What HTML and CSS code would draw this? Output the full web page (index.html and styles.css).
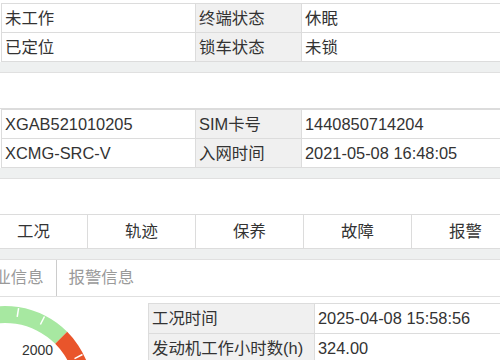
FILE: index.html
```html
<!DOCTYPE html>
<html lang="zh-CN">
<head>
<meta charset="utf-8">
<link rel="stylesheet" href="styles.css">
</head>
<body>
<div class="page">
  <div class="info">
    <div class="row">
      <div class="cell val first">未工作</div>
      <div class="cell lab">终端状态</div>
      <div class="cell val last">休眠</div>
    </div>
    <div class="row">
      <div class="cell val first">已定位</div>
      <div class="cell lab">锁车状态</div>
      <div class="cell val last">未锁</div>
    </div>
  </div>
  <div class="sep"></div>
  <div class="blank"></div>
  <div class="info">
    <div class="row">
      <div class="cell val first">XGAB521010205</div>
      <div class="cell lab">SIM卡号</div>
      <div class="cell val last">1440850714204</div>
    </div>
    <div class="row">
      <div class="cell val first">XCMG-SRC-V</div>
      <div class="cell lab">入网时间</div>
      <div class="cell val last">2021-05-08 16:48:05</div>
    </div>
  </div>
  <div class="sep"></div>
  <div class="blank"></div>
  <div class="tabs">
    <div class="tab">工况</div>
    <div class="tab">轨迹</div>
    <div class="tab">保养</div>
    <div class="tab">故障</div>
    <div class="tab">报警</div>
  </div>
  <div class="sep"></div>
  <div class="subtabs">
    <div class="subtab shifted">作业信息</div>
    <div class="subtab">报警信息</div>
  </div>
  <div class="content">
    <svg class="gauge" width="148" height="63" viewBox="0 0 148 63">
      <path d="M -81.7 112.3 A 88 88 0 0 1 67.2 34.8 L 55.2 46.8 A 71 71 0 0 0 -64.9 109.3 Z" fill="#a7e8a1"/>
      <path d="M 67.2 34.8 A 88 88 0 0 1 67.2 159.2 L 55.2 147.2 A 71 71 0 0 0 55.2 46.8 Z" fill="#e9552b"/>
      <g stroke="#ffffff" stroke-width="1.5">
        <line x1="17.2" y1="19.9" x2="18.6" y2="11.1"/>
        <line x1="40.4" y1="27.5" x2="44.5" y2="19.5"/>
        <line x1="74.5" y1="61.6" x2="82.5" y2="57.5"/>
      </g>
      <text x="22" y="58" class="glabel">2000</text>
    </svg>
    <div class="work">
      <div class="row">
        <div class="cell wlab">工况时间</div>
        <div class="cell wval">2025-04-08 15:58:56</div>
      </div>
      <div class="row">
        <div class="cell wlab">发动机工作小时数(h)</div>
        <div class="cell wval">324.00</div>
      </div>
    </div>
  </div>
</div>
</body>
</html>
```
FILE: styles.css
```css
html, body {
  margin: 0;
  padding: 0;
  background: #ffffff;
  overflow: hidden;
}
body {
  width: 500px;
  height: 360px;
  font-family: "Liberation Sans", "Noto Sans CJK SC", sans-serif;
  font-size: 16.4px;
  color: #333333;
}
.page {
  padding-top: 3px;
  width: 500px;
}
.info {
  margin-left: 1px;
  border: 1px solid #dcdcdc;
  border-right: none;
  width: 540px;
}
.row {
  display: flex;
}
.row + .row {
  border-top: 1px solid #dcdcdc;
}
.cell {
  height: 29px;
  line-height: 29px;
  padding: 0 3px;
  box-sizing: border-box;
  white-space: nowrap;
  overflow: hidden;
}
.info .first {
  width: 194px;
  border-right: 1px solid #dcdcdc;
}
.info .lab {
  width: 106px;
  background: #f0f0f0;
  border-right: 1px solid #dcdcdc;
}
.info .last {
  flex: 1;
}
.info .row .cell {
  height: 28px;
  line-height: 28px;
}
.sep {
  height: 10px;
  background: #eef0f0;
  border-bottom: 1px solid #e0e0e0;
}
.blank {
  height: 35px;
  background: #ffffff;
  border-bottom: 1px solid #dcdcdc;
}
.tabs {
  display: flex;
  margin-left: -20px;
  width: 540px;
  height: 33px;
  border-bottom: 1px solid #dcdcdc;
}
.tab {
  width: 108px;
  box-sizing: border-box;
  border-right: 1px solid #dcdcdc;
  text-align: center;
  line-height: 33px;
  color: #333333;
}
.subtabs {
  display: flex;
  height: 36px;
  border-bottom: 1px solid #e0e0e0;
}
.subtab {
  padding: 0 12px;
  line-height: 35px;
  color: #9a9a9a;
  border-right: 1px solid #cccccc;
  white-space: nowrap;
}
.subtab:last-child {
  border-right: none;
}
.shifted {
  margin-left: -34px;
}
.content {
  display: flex;
  align-items: flex-start;
}
.gauge {
  display: block;
  flex: none;
}
.glabel {
  font-family: "Liberation Sans", sans-serif;
  font-size: 14px;
  fill: #333333;
}
.work {
  margin-top: 6px;
  border: 1px solid #dcdcdc;
  border-right: none;
  width: 400px;
}
.work .cell {
  height: 29px;
  line-height: 29px;
}
.wlab {
  width: 166px;
  background: #f0f0f0;
  border-right: 1px solid #dcdcdc;
}
.wval {
  flex: 1;
}
```
